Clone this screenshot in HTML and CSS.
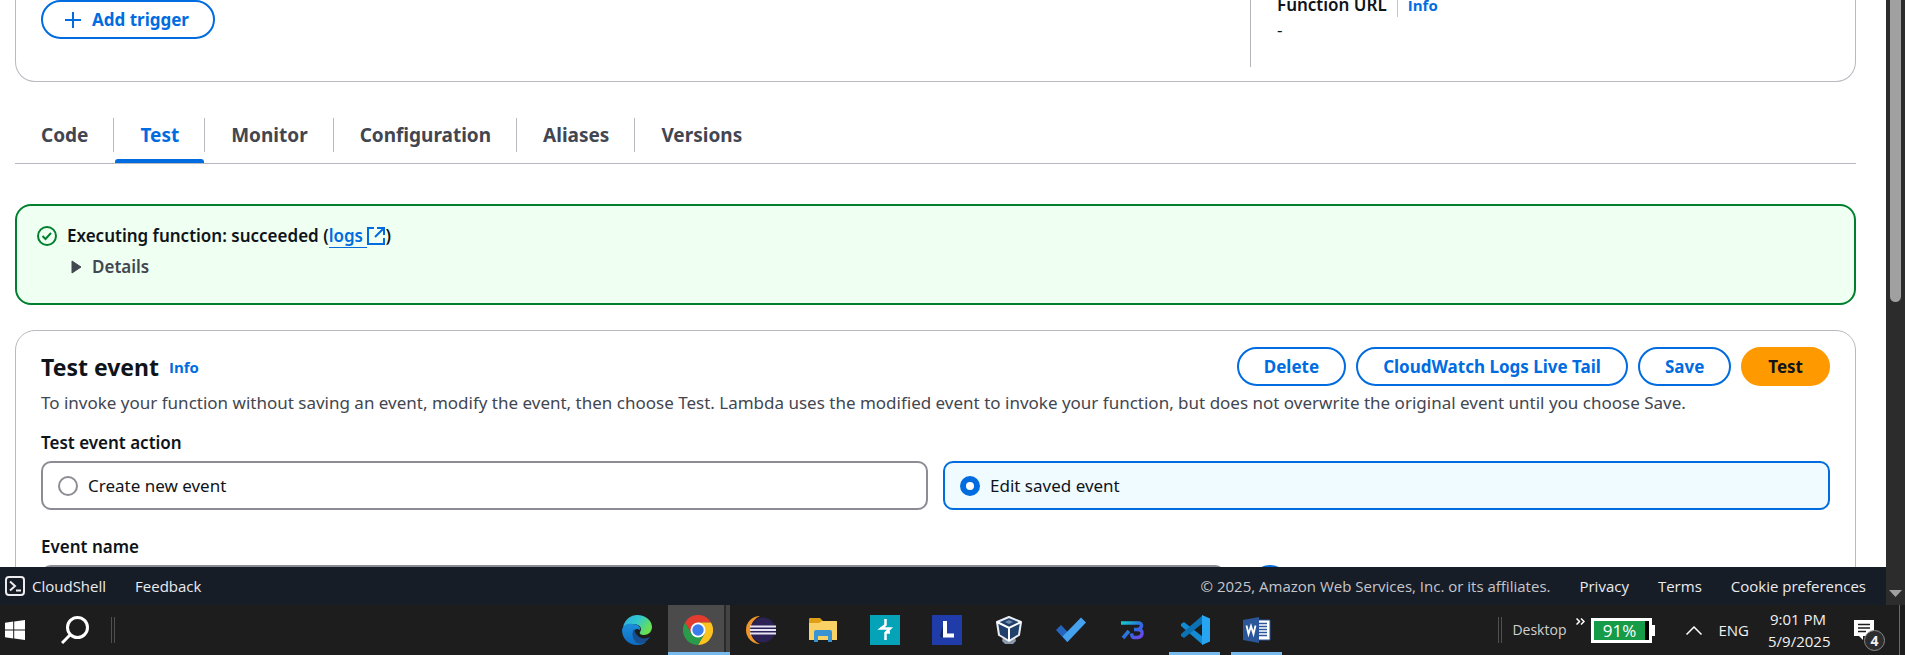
FILE: index.html
```html
<!DOCTYPE html>
<html lang="en">
<head>
<meta charset="utf-8">
<title>Lambda function - Test</title>
<link rel="stylesheet" href="styles.css">
</head>
<body>
<div class="screen">
  <div class="browser">
    <div class="viewport">
      <main class="content">
        <section class="panel overview">
          <div class="overview-main">
            <button class="btn btn-icon" type="button">
              <svg width="16" height="16" viewBox="0 0 16 16" aria-hidden="true"><path d="M8 0v16M0 8h16" stroke="currentColor" stroke-width="2"/></svg>
              Add trigger
            </button>
          </div>
          <div class="overview-side">
            <div class="field-head"><span class="field-name">Function URL</span><a class="info divided" href="#">Info</a></div>
            <div class="field-value">-</div>
          </div>
        </section>

        <nav class="tabs">
          <a class="tab" href="#">Code</a>
          <a class="tab active" href="#">Test</a>
          <a class="tab" href="#">Monitor</a>
          <a class="tab" href="#">Configuration</a>
          <a class="tab" href="#">Aliases</a>
          <a class="tab" href="#">Versions</a>
        </nav>

        <section class="alert">
          <svg class="alert-icon" width="20" height="20" viewBox="0 0 20 20" fill="none" stroke="currentColor" stroke-width="2" aria-hidden="true"><circle cx="10" cy="10" r="9"/><path d="M5.500 10l3 3 5.500-6"/></svg>
          <div class="alert-body">
            <div class="alert-title">Executing function: succeeded (<a class="logs" href="#">logs </a><svg class="external" width="18" height="18" viewBox="0 0 18 18" fill="none" stroke="currentColor" stroke-width="2" aria-hidden="true"><path d="M7 1H1v16h16v-6M10 1h7v7M17 1L8 10"/></svg>)</div>
            <button class="details" type="button"><svg width="11" height="14" viewBox="0 0 11 14" aria-hidden="true"><path d="M1 1v12l9-6z" fill="currentColor" stroke="currentColor" stroke-linejoin="round"/></svg>Details</button>
          </div>
        </section>

        <section class="panel event">
          <div class="event-head">
            <h2 class="title">Test event</h2><a class="info" href="#">Info</a>
            <div class="actions">
              <button class="btn" type="button">Delete</button>
              <button class="btn" type="button">CloudWatch Logs Live Tail</button>
              <button class="btn" type="button">Save</button>
              <button class="btn primary" type="button">Test</button>
            </div>
          </div>
          <p class="description">To invoke your function without saving an event, modify the event, then choose Test. Lambda uses the modified event to invoke your function, but does not overwrite the original event until you choose Save.</p>
          <fieldset class="group">
            <legend class="label">Test event action</legend>
            <div class="tiles">
              <label class="tile"><input class="radio" type="radio" name="action">Create new event</label>
              <label class="tile selected"><input class="radio" type="radio" name="action" checked>Edit saved event</label>
            </div>
          </fieldset>
          <label class="label" for="event-name">Event name</label>
          <div class="name-row">
            <select class="select" id="event-name"></select>
            <button class="round" type="button" aria-label="Refresh"></button>
          </div>
        </section>
      </main>
      <footer class="footer">
        <a class="footer-link shell" href="#">
          <svg width="20" height="20" viewBox="0 0 20 20" fill="none" stroke="currentColor" stroke-width="2" aria-hidden="true"><rect x="1" y="1" width="18" height="18" rx="3"/><path d="M5 5.500l5 4.500-5 4.500M11 14.500h5"/></svg>CloudShell</a>
        <a class="footer-link" href="#">Feedback</a>
        <span class="copyright">© 2025, Amazon Web Services, Inc. or its affiliates.</span>
        <a class="footer-link" href="#">Privacy</a>
        <a class="footer-link" href="#">Terms</a>
        <a class="footer-link" href="#">Cookie preferences</a>
      </footer>
    </div>
    <div class="scrollbar">
      <div class="thumb"></div>
      <svg class="arrow" width="13" height="7" viewBox="0 0 13 7" aria-hidden="true"><path d="M0 0h13L6.500 7z" fill="#a0a0a0"/></svg>
    </div>
  </div>

  <div class="taskbar">
    <div class="start">
      <button class="sys" type="button" aria-label="Start"><svg width="20" height="20" viewBox="0 0 20 20" fill="#fff"><path d="M0 2.800L8.200 1.600V9.500H0zM9.200 1.500L20 0v9.500H9.200zM0 10.500h8.200v8L0 17.300zM9.200 10.500H20V20L9.200 18.600z"/></svg></button>
      <button class="sys" type="button" aria-label="Search"><svg width="28" height="28" viewBox="0 0 28 28" fill="none" stroke="#fff" stroke-width="3"><circle cx="16.500" cy="11.500" r="10"/><path d="M9.500 18.500L1 27"/></svg></button>
      <span class="grip"></span>
    </div>
    <div class="apps">
      <button class="app" type="button" aria-label="Edge">
        <svg width="30" height="30" viewBox="0 0 30 30"><defs><linearGradient id="e1" x1="0" y1="0" x2="1" y2=".5"><stop offset="0" stop-color="#2fa9e0"/><stop offset=".5" stop-color="#2fc6d0"/><stop offset="1" stop-color="#6be04e"/></linearGradient><linearGradient id="e2" x1="0" y1="0" x2="0" y2="1"><stop offset="0" stop-color="#1c8fd8"/><stop offset="1" stop-color="#0d6cc4"/></linearGradient></defs><path d="M1 12C3 4 9 0 15 0c9 0 15 6 15 12 0 5-4 8-8 8-3 0-5-1-4-3 3-4-1-8-6-8C7 9 2 11 1 12z" fill="url(#e1)"/><path d="M0 15C1 9 7 8 11 9c5 0 8 3 7 6-4-3-8 1-6 6 2 5 7 7 12 6-3 3-7 3-9 3C6 30 0 23 0 15z" fill="url(#e2)"/><path d="M12 14c-3 5-1 11 3 14 4 2 9 0 13-6-5 2-9 2-12-1-2-2-3-4-4-7z" fill="#174f91"/></svg>
      </button>
      <button class="app current" type="button" aria-label="Chrome">
        <svg width="30" height="30" viewBox="0 0 30 30"><path d="M2 7.500A15 15 0 0 1 28 7.500H15L8.500 18.800z" fill="#e33b2e"/><path d="M28 7.500A15 15 0 0 1 15 30l6.500-11.200L15 7.500z" fill="#fcc31e"/><path d="M2 7.500A15 15 0 0 0 15 30l6.500-11.200-13 0z" fill="#2a9b4b"/><circle cx="15" cy="15" r="7.500" fill="#fff"/><circle cx="15" cy="15" r="5.700" fill="#3b7ded"/></svg>
      </button>
      <button class="app" type="button" aria-label="Eclipse">
        <svg width="30" height="28" viewBox="0 0 30 28"><path d="M14 0A14 14 0 0 0 14 28 15 15 0 0 1 14 0z" fill="#f0952a"/><circle cx="17" cy="14" r="12.500" fill="#2c2255"/><path d="M4 9.500h26v2H4zM4 13h26v2H4zM4 16.500h26v2H4z" fill="#e7e4f3"/></svg>
      </button>
      <button class="app" type="button" aria-label="File Explorer">
        <svg width="28" height="24" viewBox="0 0 28 24"><path d="M0 1q0-1 1-1h10l3 3h13q1 0 1 1v18H0z" fill="#dfa017"/><path d="M0 5h10l3-2h14q1 0 1 1v18H0z" fill="#fad165"/><path d="M5 24V14q0-2 2-2h14q2 0 2 2v10h-4v-6H9v6z" fill="#3a93d3"/></svg>
      </button>
      <button class="app" type="button" aria-label="Lightning tool">
        <svg width="30" height="30" viewBox="0 0 30 30"><path d="M0 0h30v30H0z" fill="#05a3b8"/><path d="M15.500 4v6L11 13.500h9L15.500 18v7M10 13.500h5M15 17.500h5" fill="none" stroke="#fff" stroke-width="2.500"/></svg>
      </button>
      <button class="app" type="button" aria-label="L">
        <svg width="30" height="30" viewBox="0 0 30 30"><path d="M0 0h30v30H0z" fill="#1f3ca8"/><path d="M8 21l4-14v14l-2 2z" fill="#142766"/><path d="M13 6v14.500h9" fill="none" stroke="#fff" stroke-width="4"/></svg>
      </button>
      <button class="app" type="button" aria-label="VirtualBox">
        <svg width="26" height="28" viewBox="0 0 26 28"><path d="M7 21h12l1 4-3 3H9l-3-3z" fill="#8a98ab"/><path d="M13 1l12 5-2 13-10 6L3 19 1 6z" fill="#20406b" stroke="#e7ecf3" stroke-width="2" stroke-linejoin="round"/><path d="M1 6l12 6 12-6M13 12v13" fill="none" stroke="#fff" stroke-width="2"/><path d="M9 6l4-2 4 2-4 2z" fill="#7089a8"/></svg>
      </button>
      <button class="app" type="button" aria-label="To Do">
        <svg width="30" height="26" viewBox="0 0 30 26"><path d="M0 13l5-5 10.500 11-4.500 6z" fill="#2565c0"/><path d="M6.500 19.500L25 .500l5 5-18.500 19.500z" fill="#44a2ef"/></svg>
      </button>
      <button class="app" type="button" aria-label="B">
        <svg width="24" height="20" viewBox="0 0 24 20" fill="none"><defs><linearGradient id="b1" gradientUnits="userSpaceOnUse" x1="4" y1="0" x2="20" y2="20"><stop offset="0" stop-color="#16c9c9"/><stop offset=".5" stop-color="#2c6ee0"/><stop offset="1" stop-color="#7a3ff0"/></linearGradient></defs><path d="M0 3h17q4 0 3.500 3-1 3.500-4.500 3.500h-3M16 9.500q6 0 5 4.500-1 3.500-5 3.500h-3q-2 0-2.500-4M8 11l-6 7" stroke="url(#b1)" stroke-width="3.500"/></svg>
      </button>
      <button class="app running" type="button" aria-label="Visual Studio Code">
        <svg width="30" height="30" viewBox="0 0 30 30"><path d="M1 9l3-2 19 15v8L1 11z" fill="#138bd2"/><path d="M1 21l3 2L23 8V0L1 19z" fill="#0c72b4"/><path d="M22 0l8 3.500v23L22 30z" fill="#28a5f2"/></svg>
      </button>
      <button class="app running" type="button" aria-label="Word">
        <svg width="28" height="26" viewBox="0 0 28 26"><path d="M13 3h14v20H13z" fill="#fff" stroke="#2b579a"/><path d="M16 6.500h8M16 9.500h8M16 12.500h8M16 15.500h8M16 18.500h8" stroke="#2b579a" stroke-width="1.500"/><path d="M0 3l16-3v26L0 23z" fill="#2b579a"/><path d="M3.500 8.500L5.500 17l2.500-8 2.500 8 2-8.500" fill="none" stroke="#fff" stroke-width="1.800"/></svg>
      </button>
    </div>
    <div class="tray">
      <span class="grip"></span>
      <span class="desktop">Desktop</span>
      <svg class="more" width="9" height="7" viewBox="0 0 9 7" fill="none" stroke="#fff" stroke-width="1.500" aria-hidden="true"><path d="M.500.500l3 3-3 3M5 .500l3 3-3 3"/></svg>
      <div class="battery"><span class="charge">91%</span></div>
      <svg class="chevron" width="16" height="9" viewBox="0 0 16 9" fill="none" stroke="#fff" stroke-width="1.500" aria-hidden="true"><path d="M.500 8.500L8 1l7.500 7.500"/></svg>
      <span class="lang">ENG</span>
      <div class="clock"><span>9:01 PM</span><span>5/9/2025</span></div>
      <div class="notice">
        <svg width="20" height="20" viewBox="0 0 20 20" aria-hidden="true"><path d="M0 0h20v16H9v4l-4-4H0z" fill="#fff"/><path d="M4 4.500h12M4 8h12M4 11.500h8" stroke="#1d1d1d" stroke-width="1.500"/></svg>
        <span class="badge">4</span>
      </div>
    </div>
  </div>
</div>
</body>
</html>
```
FILE: styles.css
```css
* { box-sizing: border-box; }
body {
  margin: 0;
  font-family: "Noto Sans", "Open Sans", sans-serif;
  font-size: 17px;
  line-height: 24px;
  color: #0f141a;
  background: #fff;
}
a { color: #006ce0; text-decoration: none; }
svg { flex: none; }
button { font: inherit; cursor: pointer; }

.screen { display: flex; flex-direction: column; height: 100vh; overflow: hidden; }
.browser { flex: 1; min-height: 0; display: flex; }
.viewport { flex: 1; min-width: 0; display: flex; flex-direction: column; }
.content { flex: 1; min-height: 0; overflow: hidden; padding: 0 30px 0 15px; }

.panel { border: 1px solid #b9b9c0; border-radius: 20px; padding: 0 25px; }
.overview {
  display: flex;
  margin-top: -7px;
  padding-bottom: 14px;
  border-top: 0;
  border-radius: 0 0 20px 20px;
}
.overview-main { flex: 1; padding-top: 7px; }
.overview-side {
  width: 580px;
  height: 74px;
  padding-left: 26px;
  border-left: 1px solid #b4b4bb;
}
.field-head { display: flex; align-items: center; }
.field-name { font-weight: 600; }
.field-value { line-height: 26px; }
.info { font-family: "Open Sans", "Noto Sans", sans-serif; font-size: 15px; font-weight: 700; }
.divided { margin-left: 10px; padding-left: 10px; border-left: 1px solid #c6c6cd; }

.btn {
  height: 39px;
  padding: 0 25px;
  border: 2px solid #006ce0;
  border-radius: 20px;
  background: #fff;
  color: #006ce0;
  font-weight: 700;
  line-height: 24px;
}
.btn-icon { display: flex; align-items: center; gap: 11px; padding: 0 24px 0 22px; }
.primary { border-color: #ff9900; background: #ff9900; color: #0f141a; }

.tabs { display: flex; margin-top: 34px; border-bottom: 1px solid #b9b9c0; }
.tab {
  position: relative;
  padding: 7px 26px 16px;
  color: #424650;
  font-size: 19px;
  font-weight: 700;
}
.tab:not(:last-child)::after {
  content: "";
  position: absolute;
  top: 2px;
  right: 0;
  width: 1px;
  height: 34px;
  background: #b9b9c0;
}
.active { color: #006ce0; }
.active::before {
  content: "";
  position: absolute;
  left: 1px;
  right: 1px;
  bottom: 0;
  height: 4px;
  border-radius: 3px 3px 0 0;
  background: #006ce0;
}

.alert {
  display: flex;
  gap: 10px;
  margin-top: 40px;
  height: 101px;
  padding: 18px 20px;
  border: 2px solid #00802f;
  border-radius: 16px;
  background: #effff1;
}
.alert-icon { margin-top: 2px; color: #00802f; }
.alert-title { font-weight: 600; }
.logs { border-bottom: 1px solid #006ce0; white-space: pre; }
.external { color: #006ce0; vertical-align: -3px; }
.details {
  display: flex;
  align-items: center;
  gap: 10px;
  margin-top: 7px;
  padding: 0 0 0 4px;
  border: 0;
  background: none;
  color: #424650;
  font-weight: 600;
}

.event { margin-top: 25px; padding-top: 16px; }
.event-head { display: flex; align-items: center; }
.title { margin: 0 10px 0 0; font-size: 23px; font-weight: 700; }
.actions { display: flex; gap: 10px; margin-left: auto; }
.description { margin: 5px 0 0; color: #424650; }
.group { margin: 16px 0 25px; padding: 0; border: 0; }
.label { display: block; padding: 0; font-size: 17px; font-weight: 600; }
.tiles { display: grid; grid-template-columns: 1fr 1fr; gap: 15px; margin-top: 6px; }
.tile {
  display: flex;
  align-items: center;
  gap: 10px;
  height: 49px;
  padding: 0 15px;
  border: 2px solid #8c8c94;
  border-radius: 10px;
}
.selected { border-color: #006ce0; background: #f0fbff; }
.radio {
  appearance: none;
  width: 20px;
  height: 20px;
  margin: 0;
  border: 2px solid #8c8c94;
  border-radius: 50%;
  background: #fff;
}
.radio:checked { border: 6px solid #006ce0; }
.name-row { display: flex; gap: 25px; margin-top: 6px; }
.select {
  flex: 0 1 1184px;
  height: 40px;
  border: 2px solid #8c8c94;
  border-radius: 10px;
  background: #fff;
}
.round { width: 40px; height: 40px; border: 2px solid #006ce0; border-radius: 50%; background: #fff; }

.footer {
  display: flex;
  align-items: center;
  gap: 29px;
  height: 38px;
  padding: 0 20px 0 5px;
  background: #161d26;
  font-family: "Open Sans", "Noto Sans", sans-serif;
  font-size: 15px;
}
.footer-link { color: #ebebf0; }
.shell { display: flex; align-items: center; gap: 7px; }
.copyright { margin-left: auto; color: #c6c6cd; }

.scrollbar {
  display: flex;
  flex-direction: column;
  align-items: center;
  width: 19px;
  background: #2c2c2c;
}
.thumb { width: 11px; height: 302px; border-radius: 0 0 6px 6px; background: #a0a0a0; }
.arrow { margin-top: auto; margin-bottom: 8px; }

.taskbar {
  display: grid;
  grid-template-columns: 1fr auto 1fr;
  height: 50px;
  background: #1d1d1d;
  color: #f0f0f0;
  font-family: "Open Sans", "Noto Sans", sans-serif;
  font-size: 15px;
}
.start { display: flex; align-items: center; padding-left: 5px; }
.sys { display: flex; margin-right: 36px; padding: 0; border: 0; background: none; }
.sys + .sys { margin-right: 22px; }
.grip { width: 4px; height: 26px; border: solid #505050; border-width: 0 1px; }
.apps { display: flex; padding-right: 12px; }
.app {
  display: flex;
  align-items: center;
  justify-content: center;
  width: 62px;
  padding: 0;
  border: 0;
  background: none;
}
.current {
  padding-right: 2px;
  background: linear-gradient(#76b9ed, #76b9ed) bottom / 100% 3px no-repeat, linear-gradient(to right, #4b4b4b 56px, #2a2a2a 56px, #2a2a2a 58px, #444 58px);
}
.running { background: linear-gradient(#76b9ed, #76b9ed) bottom / 51px 3px no-repeat; }
.tray { display: flex; align-items: center; justify-content: flex-end; padding-right: 5px; }
.desktop { margin: 0 10px; color: #d0d0d0; font-size: 14px; }
.more { align-self: flex-start; margin-top: 13px; }
.battery {
  position: relative;
  width: 61px;
  height: 25px;
  margin: 0 34px 0 6px;
  border: 3px solid #fff;
  background: #000;
}
.battery::after {
  content: "";
  position: absolute;
  top: 4px;
  right: -6px;
  width: 3px;
  height: 11px;
  background: #fff;
}
.charge {
  display: block;
  width: 91%;
  height: 19px;
  background: #169b48;
  color: #fff;
  font-size: 17px;
  line-height: 19px;
  text-align: center;
}
.lang { margin: 0 19px 0 16px; }
.clock { display: flex; flex-direction: column; width: 60px; line-height: 22px; text-align: center; white-space: nowrap; }
.notice {
  position: relative;
  display: flex;
  margin-left: 26px;
  padding-right: 25px;
  border-right: 1px solid #6a6a6a;
  height: 50px;
  align-items: center;
}
.badge {
  position: absolute;
  left: 10px;
  top: 25px;
  width: 21px;
  height: 21px;
  border: 1px solid #8a8a8a;
  border-radius: 50%;
  background: #2d2d2d;
  font-size: 14px;
  font-weight: 700;
  line-height: 19px;
  text-align: center;
}
```
